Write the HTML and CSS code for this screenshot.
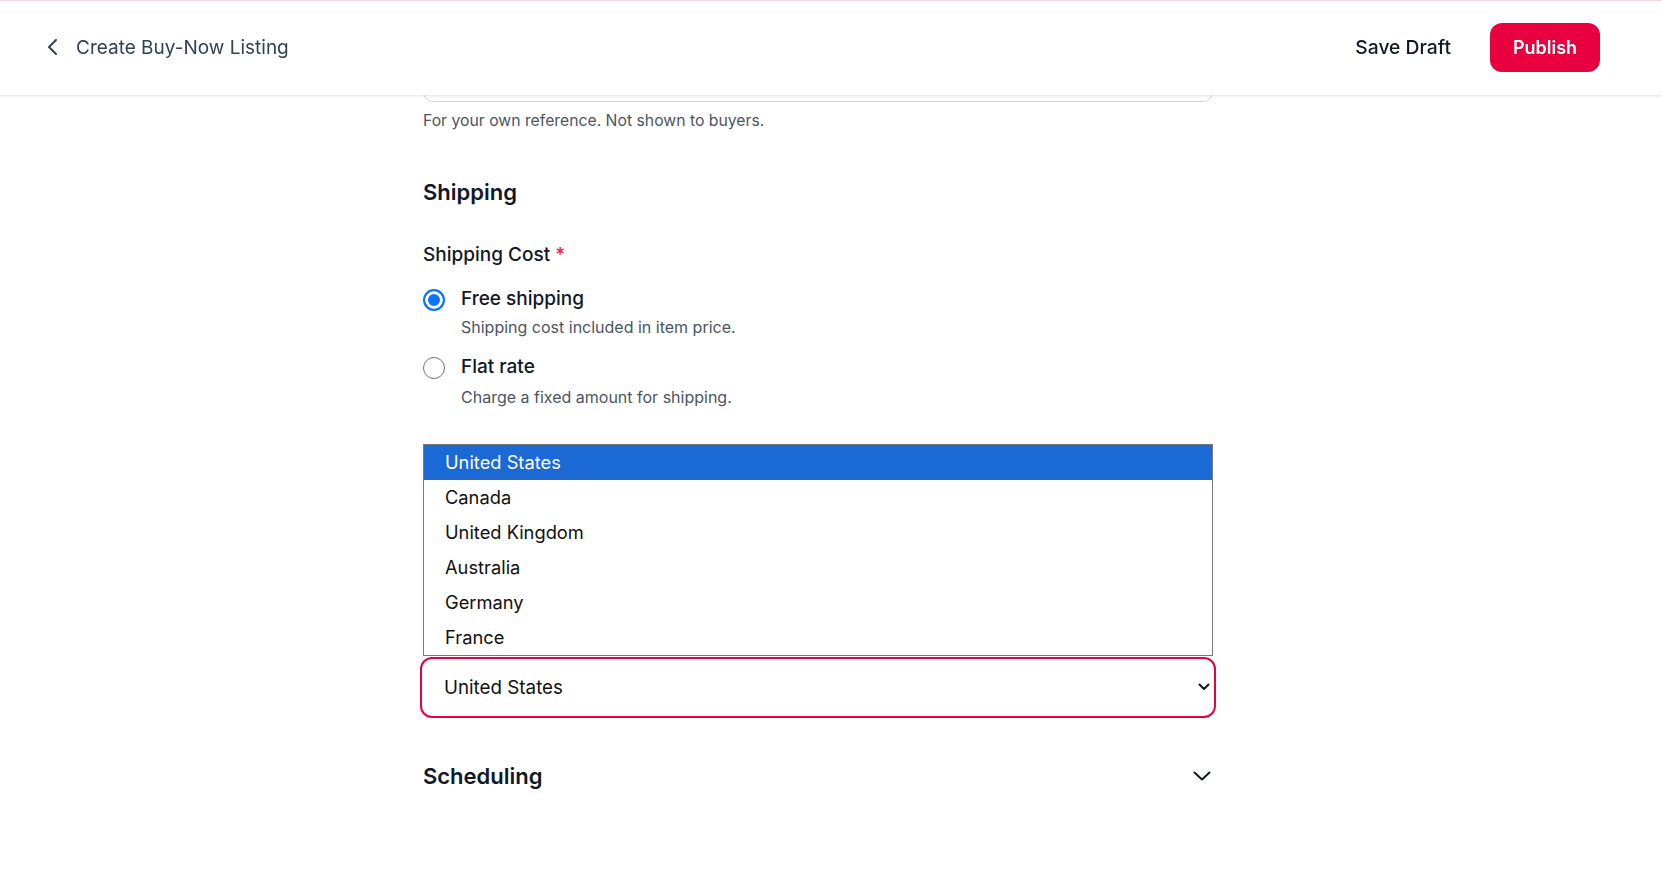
FILE: index.html
```html
<!DOCTYPE html>
<html lang="en">
<head>
<meta charset="utf-8">
<title>Create Buy-Now Listing</title>
<link rel="stylesheet" href="styles.css">
</head>
<body>
<header class="topbar">
  <div class="topbar-left">
    <button class="back" aria-label="Back">
      <svg width="12" height="18" viewBox="0 0 12 18"><polyline points="10,2 3,9 10,16" fill="none" stroke="#334155" stroke-width="2" stroke-linecap="round" stroke-linejoin="round"/></svg>
    </button>
    <span class="title">Create Buy-Now Listing</span>
  </div>
  <div class="topbar-right">
    <button class="save">Save Draft</button>
    <button class="publish">Publish</button>
  </div>
</header>

<main class="main">
  <div class="form">
    <div class="input-stub"></div>
    <p class="helper">For your own reference. Not shown to buyers.</p>

    <h2 class="section-title">Shipping</h2>

    <div class="field-label">Shipping Cost <span class="req">*</span></div>

    <div class="options">
      <div class="option">
        <div class="option-row">
          <span class="radio checked"></span>
          <span class="option-label">Free shipping</span>
        </div>
        <div class="option-desc">Shipping cost included in item price.</div>
      </div>
      <div class="option">
        <div class="option-row">
          <span class="radio"></span>
          <span class="option-label">Flat rate</span>
        </div>
        <div class="option-desc">Charge a fixed amount for shipping.</div>
      </div>
    </div>

    <div class="listbox">
      <div class="list-item active">United States</div>
      <div class="list-item">Canada</div>
      <div class="list-item">United Kingdom</div>
      <div class="list-item">Australia</div>
      <div class="list-item">Germany</div>
      <div class="list-item">France</div>
    </div>
    <div class="select">
      <span class="select-value">United States</span>
      <svg class="select-caret" width="12" height="8" viewBox="0 0 12 8"><polyline points="1.5,1.5 6,6 10.5,1.5" fill="none" stroke="#111827" stroke-width="2" stroke-linecap="round" stroke-linejoin="round"/></svg>
    </div>

    <div class="collapse-row">
      <h2 class="section-title">Scheduling</h2>
      <svg class="collapse-caret" width="18" height="10" viewBox="0 0 18 10"><polyline points="1.5,1.5 9,8.5 16.5,1.5" fill="none" stroke="#111827" stroke-width="2" stroke-linecap="round" stroke-linejoin="round"/></svg>
    </div>
  </div>
</main>
</body>
</html>
```

FILE: styles.css
```css
* { box-sizing: border-box; }

html, body {
  margin: 0;
  padding: 0;
  background: #ffffff;
  font-family: Inter, "Noto Sans", "Liberation Sans", sans-serif;
  color: #111827;
}

.topbar {
  position: fixed;
  top: 0;
  left: 0;
  right: 0;
  height: 95px;
  background: #ffffff;
  border-top: 1px solid #f8d7df;
  box-shadow: 0 1px 3px rgba(0, 0, 0, 0.12);
  display: flex;
  align-items: center;
  justify-content: space-between;
  padding: 0 62px 2px 45px;
  z-index: 10;
}

.topbar-left {
  display: flex;
  align-items: center;
  gap: 17px;
}

.back {
  border: 0;
  background: none;
  padding: 0;
  width: 14px;
  height: 18px;
  display: flex;
  align-items: center;
  justify-content: center;
}

.title {
  font-size: 19px;
  color: #334155;
  font-weight: 400;
}

.topbar-right {
  display: flex;
  align-items: center;
  gap: 39px;
}

.save {
  border: 0;
  background: none;
  padding: 0;
  font-family: inherit;
  font-size: 19.3px;
  font-weight: 500;
  color: #111827;
}

.publish {
  border: 0;
  background: #e9003f;
  color: #ffffff;
  font-family: inherit;
  font-size: 18px;
  font-weight: 600;
  width: 110px;
  height: 49px;
  border-radius: 12px;
}

.main {
  display: flex;
  justify-content: center;
  padding: 54px 26px 0 0;
}

.form {
  width: 790px;
  display: flex;
  flex-direction: column;
}

.input-stub {
  height: 48px;
  border: 1px solid #cbd5e1;
  border-radius: 10px;
}

.helper {
  margin: 8px 0 0;
  font-size: 15.75px;
  line-height: 22px;
  color: #4b5563;
}

.section-title {
  margin: 45px 0 0;
  font-size: 22px;
  line-height: 30px;
  font-weight: 600;
  color: #111827;
}

.field-label {
  margin-top: 35px;
  font-size: 19px;
  line-height: 26px;
  font-weight: 500;
  color: #111827;
}

.req { color: #ef233c; }

.options {
  margin-top: 18px;
  display: flex;
  flex-direction: column;
  gap: 16px;
}

.option-row {
  display: flex;
  align-items: center;
  gap: 16px;
}

.radio {
  width: 22px;
  height: 22px;
  border-radius: 50%;
  border: 1.5px solid #767676;
  flex: none;
  margin-top: 1px;
}

.radio.checked {
  border: 2px solid #0b74ff;
  background: #0b74ff;
  box-shadow: inset 0 0 0 3px #ffffff;
}

.option-label {
  font-size: 19px;
  line-height: 26px;
  font-weight: 500;
}

.option-desc {
  margin: 4px 0 0 38px;
  font-size: 16px;
  line-height: 22px;
  color: #4b5563;
}

.option + .option .option-desc { margin-top: 6px; }

.listbox {
  margin-top: 36px;
  border: 1px solid #7a7a7a;
  display: flex;
  flex-direction: column;
}

.list-item {
  height: 35px;
  line-height: 35px;
  padding-left: 21px;
  font-size: 18.3px;
  color: #111111;
}

.list-item.active {
  background: #1a69d4;
  color: #ffffff;
}

.select {
  margin: 1px -3px 0;
  height: 61px;
  border: 2.5px solid #e9003f;
  border-radius: 12px;
  display: flex;
  align-items: center;
  justify-content: space-between;
  padding: 0 4px 0 22px;
}

.select-value {
  font-size: 18.8px;
  color: #111111;
}

.select-caret { margin-top: -1px; }

.collapse-row {
  margin-top: 43px;
  display: flex;
  align-items: center;
  justify-content: space-between;
}

.collapse-row .section-title {
  margin: 0;
}

.collapse-caret { margin-right: 2px; }
```
